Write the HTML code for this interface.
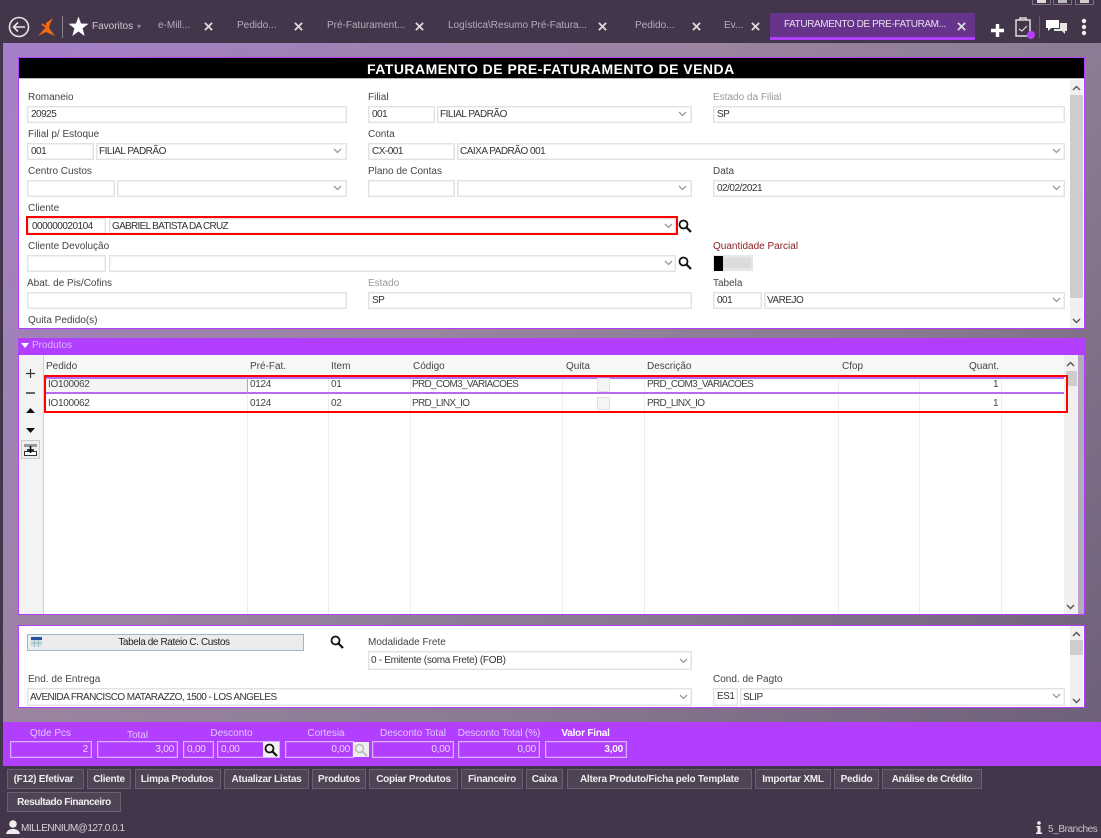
<!DOCTYPE html>
<html lang="pt"><head><meta charset="utf-8"><title>Faturamento</title>
<style>
html,body{margin:0;padding:0}
body{width:1101px;height:838px;overflow:hidden;position:relative;background:#43364a;font-family:"Liberation Sans",sans-serif;font-size:10px;letter-spacing:0;color:#333}
div,span,svg{position:absolute;box-sizing:border-box}
.t{white-space:nowrap;line-height:12px;height:12px;margin-top:1px}
.l{white-space:nowrap;line-height:12px;height:12px;color:#444;margin-top:1px}
.g{color:#999}
.i{border:1px solid #e2e2e2;background:#fff;box-shadow:inset 0 0 0 1px #f2f2f2;white-space:nowrap;line-height:15px;padding-left:3px;color:#333;overflow:hidden;letter-spacing:-.5px}
.d{line-height:16px;padding-left:2px}
.tab{color:#b5adbb;white-space:nowrap;line-height:12px;height:12px;top:20px;letter-spacing:0}
.x{top:22px;width:9px;height:9px}
.p{background:#fff;border:1px solid #b23fff}
.b{background:#4f4456;border:1px solid #6a5f70;color:#eee;font-weight:bold;text-align:center;height:20px;line-height:20px;letter-spacing:-.25px;white-space:nowrap}
.pl{color:#e3c4ff;white-space:nowrap;text-align:center;line-height:12px;height:12px;top:728px}
.pi{top:741px;height:17px;border:1px solid #d9b0ff;background:#b23fff;color:#ecd8ff;text-align:right;padding-right:3px;line-height:15px;box-shadow:inset 0 0 0 1px #bd5cff;letter-spacing:-.2px}
.c{white-space:nowrap;line-height:12px;height:12px;color:#444;margin-top:1px}
.r{letter-spacing:-.3px}
.u{letter-spacing:-.7px}
.v{top:377px;height:237px;width:1px;background:#eee}
.car{width:9px;height:6px}
</style></head><body>

<!-- content background -->
<div style="left:3px;top:43px;width:1098px;height:680px;background:linear-gradient(135deg,#a57fc9 0%,#9a849f 40%,#8a7a92 65%,#6f6079 100%)"></div>

<!-- window buttons -->
<div style="left:1032px;top:-6px;width:19px;height:11px;border:1px solid #7c7284;background:#43364a"></div>
<div style="left:1053px;top:-6px;width:19px;height:11px;border:1px solid #7c7284;background:#43364a"></div>
<div style="left:1075px;top:-6px;width:19px;height:11px;border:1px solid #7c7284;background:#43364a"></div>
<div style="left:1037px;top:0;width:9px;height:3px;background:#ddd"></div>
<div style="left:1058px;top:0;width:9px;height:3px;background:#bbb"></div>
<div style="left:1080px;top:0;width:9px;height:3px;background:#ccc"></div>

<!-- top bar icons -->
<svg style="left:8px;top:16px" width="22" height="22" viewBox="0 0 22 22"><circle cx="11" cy="11" r="9.5" fill="none" stroke="#e6e6e6" stroke-width="1.6"/><path d="M17 11H6M10 6.5L5.5 11L10 15.5" fill="none" stroke="#e6e6e6" stroke-width="1.6"/></svg>
<svg style="left:37px;top:17px" width="19" height="20" viewBox="0 0 19 20"><path d="M16 1L9 6L9 10L1 19L9 15L18 19L12 11L13 7Z" fill="#f26a12"/><path d="M5 7L9 10" stroke="#f26a12" stroke-width="2"/></svg>
<div style="left:62px;top:16px;width:1px;height:22px;background:#8a8090"></div>
<svg style="left:68px;top:16px" width="21" height="21" viewBox="0 0 21 21"><path d="M10.500 0.500L13 7.500L20.500 7.800L14.600 12.400L16.700 20L10.500 15.500L4.300 20L6.400 12.400L0.500 7.800L8 7.500Z" fill="#fff"/></svg>
<div class="tab" style="left:92px;top:21px;color:#d0c8d4">Favoritos</div>
<div class="tab" style="left:137px;top:21px;color:#8f8596;font-size:8px">▾</div>

<div class="tab" style="left:158px">e-Mill...</div>
<div class="tab" style="left:237px">Pedido...</div>
<div class="tab" style="left:327px">Pré-Faturament...</div>
<div class="tab" style="left:448px">Logística\Resumo Pré-Fatura...</div>
<div class="tab" style="left:635px">Pedido...</div>
<div class="tab" style="left:724px">Ev...</div>
<svg class="x" style="left:204px" viewBox="0 0 10 10"><path d="M1 1L9 9M9 1L1 9" stroke="#ddd" stroke-width="2"/></svg>
<svg class="x" style="left:294px" viewBox="0 0 10 10"><path d="M1 1L9 9M9 1L1 9" stroke="#ddd" stroke-width="2"/></svg>
<svg class="x" style="left:415px" viewBox="0 0 10 10"><path d="M1 1L9 9M9 1L1 9" stroke="#ddd" stroke-width="2"/></svg>
<svg class="x" style="left:598px" viewBox="0 0 10 10"><path d="M1 1L9 9M9 1L1 9" stroke="#ddd" stroke-width="2"/></svg>
<svg class="x" style="left:692px" viewBox="0 0 10 10"><path d="M1 1L9 9M9 1L1 9" stroke="#ddd" stroke-width="2"/></svg>
<svg class="x" style="left:751px" viewBox="0 0 10 10"><path d="M1 1L9 9M9 1L1 9" stroke="#ddd" stroke-width="2"/></svg>

<div style="left:770px;top:13px;width:205px;height:27px;background:#66348a;border-bottom:3px solid #b23fff"></div>
<div class="tab" style="left:784px;top:19px;color:#e8e0ee;letter-spacing:-.4px">FATURAMENTO DE PRE-FATURAM...</div>
<svg class="x" style="left:957px" viewBox="0 0 10 10"><path d="M1 1L9 9M9 1L1 9" stroke="#ddd" stroke-width="2"/></svg>

<svg style="left:991px;top:24px" width="13" height="13" viewBox="0 0 13 13"><path d="M6.500 0V13M0 6.500H13" stroke="#fff" stroke-width="3.400"/></svg>
<svg style="left:1014px;top:16px" width="24" height="24" viewBox="0 0 24 24"><path d="M2 4H16V20H2Z" fill="none" stroke="#ddd" stroke-width="1.500"/><path d="M6 4V2H12V4" fill="none" stroke="#ddd" stroke-width="1.500"/><path d="M5 13L8 15L13 10" fill="none" stroke="#ddd" stroke-width="1.200"/><circle cx="17" cy="19" r="4" fill="#b23fff"/></svg>
<div style="left:1039px;top:16px;width:1px;height:22px;background:#65596c"></div>
<svg style="left:1045px;top:19px" width="23" height="17" viewBox="0 0 23 17"><path d="M1 1H14V9H6L3 12V9H1Z" fill="#fff"/><path d="M15 4H22V12H20V15L17 12H9V10H15Z" fill="#e6e6e6"/></svg>
<svg style="left:1081px;top:18px" width="6" height="18" viewBox="0 0 6 18"><circle cx="3" cy="3" r="2.200" fill="#eee"/><circle cx="3" cy="9" r="2.200" fill="#eee"/><circle cx="3" cy="15" r="2.200" fill="#eee"/></svg>

<!-- panel 1 -->
<div class="p" style="left:18px;top:57px;width:1067px;height:272px"></div>
<div style="left:19px;top:58px;width:1065px;height:21px;background:#000;border-bottom:1px solid #bbb"></div>
<div class="t" style="left:367px;top:62px;margin-top:0;height:14px;line-height:14px;color:#fff;font-weight:bold;font-size:14px;letter-spacing:.48px">FATURAMENTO DE PRE-FATURAMENTO DE VENDA</div>

<div style="left:1070px;top:80px;width:13px;height:248px;background:#f0f0f0"></div>
<div style="left:1070px;top:95px;width:13px;height:203px;background:#cdcdcd"></div>
<svg class="car" style="left:1072px;top:85px" viewBox="0 0 9 6"><path d="M1 5L4.500 1.500L8 5" fill="none" stroke="#555" stroke-width="1.400"/></svg>
<svg class="car" style="left:1072px;top:318px" viewBox="0 0 9 6"><path d="M1 1L4.500 4.500L8 1" fill="none" stroke="#555" stroke-width="1.400"/></svg>

<div class="l" style="left:28px;top:91px">Romaneio</div>
<div class="i" style="left:27px;top:106px;width:320px;height:17px">20925</div>
<div class="l" style="left:368px;top:91px">Filial</div>
<div class="i" style="left:368px;top:106px;width:67px;height:17px">001</div>
<div class="i d" style="left:437px;top:106px;width:255px;height:17px">FILIAL PADRÃO</div>
<div class="l g" style="left:713px;top:91px">Estado da Filial</div>
<div class="i" style="left:713px;top:106px;width:352px;height:17px">SP</div>

<div class="l" style="left:28px;top:128px">Filial p/ Estoque</div>
<div class="i" style="left:27px;top:143px;width:67px;height:17px">001</div>
<div class="i d" style="left:96px;top:143px;width:251px;height:17px">FILIAL PADRÃO</div>
<div class="l" style="left:368px;top:128px">Conta</div>
<div class="i" style="left:368px;top:143px;width:87px;height:17px">CX-001</div>
<div class="i d" style="left:457px;top:143px;width:608px;height:17px">CAIXA PADRÃO 001</div>

<div class="l" style="left:28px;top:165px">Centro Custos</div>
<div class="i" style="left:27px;top:180px;width:88px;height:17px"></div>
<div class="i" style="left:117px;top:180px;width:230px;height:17px"></div>
<div class="l" style="left:368px;top:165px">Plano de Contas</div>
<div class="i" style="left:368px;top:180px;width:87px;height:17px"></div>
<div class="i" style="left:457px;top:180px;width:235px;height:17px"></div>
<div class="l" style="left:713px;top:165px">Data</div>
<div class="i" style="left:713px;top:180px;width:352px;height:17px">02/02/2021</div>

<div class="l" style="left:28px;top:202px">Cliente</div>
<div class="i" style="left:28px;top:218px;width:78px;height:16px;line-height:14px;padding-top:1px">000000020104</div>
<div class="i" style="left:109px;top:218px;width:567px;height:16px;line-height:15px;padding-left:2px;letter-spacing:-.7px">GABRIEL BATISTA DA CRUZ</div>
<div style="left:26px;top:216px;width:652px;height:19px;border:2px solid #f00"></div>

<div class="l" style="left:28px;top:240px">Cliente Devolução</div>
<div class="i" style="left:27px;top:255px;width:79px;height:17px"></div>
<div class="i" style="left:109px;top:255px;width:567px;height:17px"></div>
<div class="l" style="left:713px;top:240px;color:#8a1c1c">Quantidade Parcial</div>
<div style="left:713px;top:255px;width:40px;height:16px;background:#e6e6e6"></div>
<div style="left:723px;top:258px;width:28px;height:10px;background:#dcdcdc"></div>
<div style="left:714px;top:256px;width:9px;height:15px;background:#000"></div>

<div class="l" style="left:27px;top:277px">Abat. de Pis/Cofins</div>
<div class="i" style="left:27px;top:292px;width:320px;height:17px"></div>
<div class="l g" style="left:368px;top:277px">Estado</div>
<div class="i" style="left:368px;top:292px;width:324px;height:17px">SP</div>
<div class="l" style="left:713px;top:277px">Tabela</div>
<div class="i" style="left:713px;top:292px;width:49px;height:17px">001</div>
<div class="i d" style="left:764px;top:292px;width:301px;height:17px">VAREJO</div>

<div class="l" style="left:28px;top:314px">Quita Pedido(s)</div>

<!-- chevrons panel 1 -->
<svg class="car" style="left:333px;top:148px" viewBox="0 0 9 6"><path d="M1 1L4.500 4.500L8 1" fill="none" stroke="#999" stroke-width="1.300"/></svg>
<svg class="car" style="left:333px;top:185px" viewBox="0 0 9 6"><path d="M1 1L4.500 4.500L8 1" fill="none" stroke="#999" stroke-width="1.300"/></svg>
<svg class="car" style="left:678px;top:111px" viewBox="0 0 9 6"><path d="M1 1L4.500 4.500L8 1" fill="none" stroke="#999" stroke-width="1.300"/></svg>
<svg class="car" style="left:678px;top:185px" viewBox="0 0 9 6"><path d="M1 1L4.500 4.500L8 1" fill="none" stroke="#999" stroke-width="1.300"/></svg>
<svg class="car" style="left:1052px;top:148px" viewBox="0 0 9 6"><path d="M1 1L4.500 4.500L8 1" fill="none" stroke="#999" stroke-width="1.300"/></svg>
<svg class="car" style="left:1052px;top:185px" viewBox="0 0 9 6"><path d="M1 1L4.500 4.500L8 1" fill="none" stroke="#999" stroke-width="1.300"/></svg>
<svg class="car" style="left:1052px;top:297px" viewBox="0 0 9 6"><path d="M1 1L4.500 4.500L8 1" fill="none" stroke="#999" stroke-width="1.300"/></svg>
<svg class="car" style="left:664px;top:223px" viewBox="0 0 9 6"><path d="M1 1L4.500 4.500L8 1" fill="none" stroke="#999" stroke-width="1.300"/></svg>
<svg class="car" style="left:664px;top:260px" viewBox="0 0 9 6"><path d="M1 1L4.500 4.500L8 1" fill="none" stroke="#999" stroke-width="1.300"/></svg>
<svg style="left:678px;top:219px" width="14" height="14" viewBox="0 0 14 14"><circle cx="5.500" cy="5.500" r="4" fill="none" stroke="#111" stroke-width="1.800"/><path d="M8.500 8.500L13 13" stroke="#111" stroke-width="2.200"/></svg>
<svg style="left:678px;top:256px" width="14" height="14" viewBox="0 0 14 14"><circle cx="5.500" cy="5.500" r="4" fill="none" stroke="#111" stroke-width="1.800"/><path d="M8.500 8.500L13 13" stroke="#111" stroke-width="2.200"/></svg>

<!-- panel 2 -->
<div style="left:18px;top:338px;width:1067px;height:17px;background:#b23fff"></div>
<svg style="left:20px;top:343px" width="10" height="6" viewBox="0 0 10 6"><path d="M1 0H9L5 5Z" fill="#fff"/></svg>
<div class="t" style="left:32px;top:339px;color:#ddb6ff">Produtos</div>
<div class="p" style="left:18px;top:355px;width:1067px;height:260px;border-top:0"></div>
<div style="left:19px;top:355px;width:25px;height:259px;background:#f3f3f3;border-right:1px solid #d0d0d0"></div>
<div style="left:44px;top:355px;width:1020px;height:21px;background:#f7f7f7"></div>

<div class="v" style="left:247px"></div>
<div class="v" style="left:328px"></div>
<div class="v" style="left:410px"></div>
<div class="v" style="left:562px"></div>
<div class="v" style="left:644px"></div>
<div class="v" style="left:838px"></div>
<div class="v" style="left:919px"></div>
<div class="v" style="left:1001px"></div>

<div class="c" style="left:46px;top:360px">Pedido</div>
<div class="c" style="left:250px;top:360px">Pré-Fat.</div>
<div class="c" style="left:331px;top:360px">Item</div>
<div class="c" style="left:413px;top:360px">Código</div>
<div class="c" style="left:566px;top:360px">Quita</div>
<div class="c" style="left:647px;top:360px">Descrição</div>
<div class="c" style="left:842px;top:360px">Cfop</div>
<div class="c" style="left:969px;top:360px">Quant.</div>

<div style="left:46px;top:378px;width:201px;height:15px;background:#f4f4f4"></div>
<div style="left:46px;top:377px;width:1018px;height:2px;background:#b56cf0"></div>
<div style="left:46px;top:392px;width:1018px;height:2px;background:#b56cf0"></div>
<div style="left:247px;top:378px;width:1px;height:15px;background:#c98bf5"></div>

<div class="c r" style="left:48px;top:378px">IO100062</div>
<div class="c r" style="left:250px;top:378px">0124</div>
<div class="c r" style="left:331px;top:378px">01</div>
<div class="c u" style="left:412px;top:378px">PRD_COM3_VARIACOES</div>
<div class="c u" style="left:647px;top:378px">PRD_COM3_VARIACOES</div>
<div class="c" style="left:993px;top:378px">1</div>
<div class="c r" style="left:48px;top:397px">IO100062</div>
<div class="c r" style="left:250px;top:397px">0124</div>
<div class="c r" style="left:331px;top:397px">02</div>
<div class="c u" style="left:412px;top:397px">PRD_LINX_IO</div>
<div class="c u" style="left:647px;top:397px">PRD_LINX_IO</div>
<div class="c" style="left:993px;top:397px">1</div>
<div style="left:597px;top:378px;width:13px;height:14px;background:#f5f5f5;border:1px solid #e0e0e0"></div>
<div style="left:597px;top:397px;width:13px;height:13px;background:#f5f5f5;border:1px solid #e0e0e0"></div>

<div style="left:1064px;top:355px;width:14px;height:259px;background:#f0f0f0"></div>
<div style="left:1066px;top:371px;width:11px;height:15px;background:#cdcdcd"></div>
<div style="left:1078px;top:355px;width:6px;height:259px;background:#b5a9bd"></div>
<svg class="car" style="left:1066px;top:361px" viewBox="0 0 9 6"><path d="M1 5L4.500 1.500L8 5" fill="none" stroke="#555" stroke-width="1.400"/></svg>
<svg class="car" style="left:1066px;top:604px" viewBox="0 0 9 6"><path d="M1 1L4.500 4.500L8 1" fill="none" stroke="#555" stroke-width="1.400"/></svg>

<div style="left:44px;top:375px;width:1024px;height:38px;border:2px solid #f00"></div>

<svg style="left:25px;top:368px" width="11" height="11" viewBox="0 0 11 11"><path d="M5.500 1V10M1 5.500H10" stroke="#333" stroke-width="1.200"/></svg>
<div style="left:26px;top:392px;width:9px;height:1.500px;background:#666"></div>
<svg style="left:26px;top:408px" width="9" height="5" viewBox="0 0 9 5"><path d="M4.500 0L9 5H0Z" fill="#111"/></svg>
<svg style="left:26px;top:428px" width="9" height="5" viewBox="0 0 9 5"><path d="M0 0H9L4.500 5Z" fill="#111"/></svg>
<div style="left:21px;top:440px;width:19px;height:19px;border:1px solid #ccc;background:#eee"></div>
<svg style="left:24px;top:444px" width="13" height="13" viewBox="0 0 13 13"><rect x="0" y="0" width="13" height="3" fill="#999"/><rect x="0.500" y="7.500" width="12" height="4" fill="#fff" stroke="#333"/><path d="M6.500 2V9M3 6H10" stroke="#000" stroke-width="1.500"/></svg>

<!-- panel 3 -->
<div class="p" style="left:18px;top:625px;width:1067px;height:83px"></div>
<div style="left:1070px;top:626px;width:13px;height:81px;background:#f0f0f0"></div>
<div style="left:1070px;top:640px;width:13px;height:15px;background:#cdcdcd"></div>
<svg class="car" style="left:1072px;top:631px" viewBox="0 0 9 6"><path d="M1 5L4.500 1.500L8 5" fill="none" stroke="#555" stroke-width="1.400"/></svg>
<svg class="car" style="left:1072px;top:698px" viewBox="0 0 9 6"><path d="M1 1L4.500 4.500L8 1" fill="none" stroke="#555" stroke-width="1.400"/></svg>

<div style="left:27px;top:634px;width:277px;height:17px;background:#ececec;border:1px solid #9cb8cc;text-align:center;line-height:16px;color:#222;padding-left:17px;letter-spacing:-.4px">Tabela de Rateio C. Custos</div>
<svg style="left:31px;top:637px" width="11" height="10" viewBox="0 0 11 10"><rect width="11" height="10" fill="#cfe3f2"/><rect width="11" height="3" fill="#2a4fa0"/><path d="M0 6H11M3.500 3V10M7.500 3V10" stroke="#8aa" stroke-width=".7"/></svg>
<svg style="left:330px;top:635px" width="14" height="14" viewBox="0 0 14 14"><circle cx="5.500" cy="5.500" r="4" fill="none" stroke="#111" stroke-width="1.800"/><path d="M8.500 8.500L13 13" stroke="#111" stroke-width="2.200"/></svg>

<div class="l" style="left:368px;top:636px">Modalidade Frete</div>
<div class="i" style="left:368px;top:651px;width:324px;height:19px;line-height:17px;padding-left:2px;letter-spacing:-.3px">0 - Emitente (soma Frete) (FOB)</div>
<div class="l" style="left:28px;top:673px">End. de Entrega</div>
<div class="i" style="left:27px;top:688px;width:665px;height:18px;line-height:17px;padding-left:2px;letter-spacing:-.57px">AVENIDA FRANCISCO MATARAZZO, 1500 - LOS ANGELES</div>
<div class="l" style="left:713px;top:673px">Cond. de Pagto</div>
<div class="i" style="left:713px;top:688px;width:25px;height:18px;line-height:15px">ES1</div>
<div class="i" style="left:740px;top:688px;width:325px;height:18px;line-height:17px;padding-left:2px">SLIP</div>
<svg class="car" style="left:679px;top:658px" viewBox="0 0 9 6"><path d="M1 1L4.500 4.500L8 1" fill="none" stroke="#999" stroke-width="1.300"/></svg>
<svg class="car" style="left:679px;top:694px" viewBox="0 0 9 6"><path d="M1 1L4.500 4.500L8 1" fill="none" stroke="#999" stroke-width="1.300"/></svg>
<svg class="car" style="left:1052px;top:693px" viewBox="0 0 9 6"><path d="M1 1L4.500 4.500L8 1" fill="none" stroke="#999" stroke-width="1.300"/></svg>

<!-- purple band -->
<div style="left:3px;top:722px;width:1098px;height:44px;background:#b23fff"></div>
<div class="pl" style="left:10px;width:81px">Qtde Pcs</div>
<div class="pl" style="left:97px;width:81px;top:730px">Total</div>
<div class="pl" style="left:183px;width:97px">Desconto</div>
<div class="pl" style="left:285px;width:82px">Cortesia</div>
<div class="pl" style="left:372px;width:82px">Desconto Total</div>
<div class="pl" style="left:454px;width:90px;letter-spacing:-.1px">Desconto Total (%)</div>
<div class="pl" style="left:545px;width:81px;color:#fff;font-weight:bold;letter-spacing:-.2px">Valor Final</div>

<div class="pi" style="left:10px;width:82px">2</div>
<div class="pi" style="left:97px;width:81px">3,00</div>
<div class="pi" style="left:183px;width:31px;text-align:left;padding-left:3px">0,00</div>
<div class="pi" style="left:217px;width:63px;text-align:left;padding-left:3px">0,00</div>
<div style="left:263px;top:742px;width:16px;height:15px;background:#f2f2f2"></div>
<svg style="left:264px;top:743px" width="14" height="14" viewBox="0 0 14 14"><circle cx="5.500" cy="5.500" r="4" fill="none" stroke="#111" stroke-width="1.800"/><path d="M8.500 8.500L13 13" stroke="#111" stroke-width="2.200"/></svg>
<div class="pi" style="left:285px;width:69px">0,00</div>
<div style="left:353px;top:742px;width:16px;height:15px;background:#eee"></div>
<svg style="left:354px;top:743px" width="14" height="14" viewBox="0 0 14 14"><circle cx="5.500" cy="5.500" r="4" fill="none" stroke="#bbb" stroke-width="1.500"/><path d="M8.500 8.500L13 13" stroke="#bbb" stroke-width="1.800"/></svg>
<div class="pi" style="left:372px;width:82px">0,00</div>
<div class="pi" style="left:458px;width:82px">0,00</div>
<div class="pi" style="left:545px;width:82px;color:#fff;font-weight:bold">3,00</div>

<!-- buttons -->
<div class="b" style="left:7px;top:769px;width:77px;padding-right:4px">(F12) Efetivar</div>
<div class="b" style="left:87px;top:769px;width:44px">Cliente</div>
<div class="b" style="left:135px;top:769px;width:86px;padding-right:2px">Limpa Produtos</div>
<div class="b" style="left:224px;top:769px;width:85px">Atualizar Listas</div>
<div class="b" style="left:312px;top:769px;width:54px">Produtos</div>
<div class="b" style="left:369px;top:769px;width:89px">Copiar Produtos</div>
<div class="b" style="left:461px;top:769px;width:62px">Financeiro</div>
<div class="b" style="left:526px;top:769px;width:37px">Caixa</div>
<div class="b" style="left:567px;top:769px;width:185px">Altera Produto/Ficha pelo Template</div>
<div class="b" style="left:755px;top:769px;width:76px">Importar XML</div>
<div class="b" style="left:834px;top:769px;width:45px">Pedido</div>
<div class="b" style="left:882px;top:769px;width:100px;letter-spacing:-.4px">Análise de Crédito</div>
<div class="b" style="left:7px;top:792px;width:114px;letter-spacing:-.4px">Resultado Financeiro</div>

<!-- status -->
<svg style="left:6px;top:820px" width="14" height="14" viewBox="0 0 14 14"><circle cx="7" cy="4" r="3.800" fill="#eee"/><path d="M0 14C1 10 4 9 7 9C10 9 13 10 14 14Z" fill="#eee"/></svg>
<div class="t" style="left:21px;top:822px;color:#d8d2dc;letter-spacing:-.5px">MILLENNIUM@127.0.0.1</div>
<svg style="left:1036px;top:821px" width="6" height="13" viewBox="0 0 6 13"><circle cx="3" cy="2" r="1.800" fill="#eee"/><path d="M0.500 5H4.500V11.500H6V13H0V11.500H1.500V6.500H0.500Z" fill="#eee"/></svg>
<div class="t" style="left:1048px;top:823px;color:#c8c2cc;letter-spacing:-.4px">5_Branches</div>
</body></html>
